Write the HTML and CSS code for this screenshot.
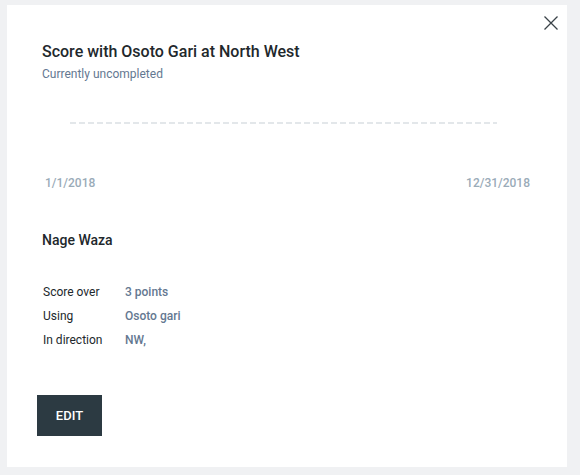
FILE: index.html
```html
<!DOCTYPE html>
<html>
<head>
<meta charset="utf-8">
<link rel="stylesheet" href="styles.css">
</head>
<body>
<div class="card">
  <button class="close" aria-label="Close">
    <svg width="14" height="14" viewBox="0 0 14 14"><path d="M0.5 0.5 L13.5 13.5 M13.5 0.5 L0.5 13.5" stroke="#3a4248" stroke-width="1.3" fill="none"/></svg>
  </button>
  <div class="content">
    <h1 class="title">Score with Osoto Gari at North West</h1>
    <div class="subtitle">Currently uncompleted</div>
    <div class="timeline">
      <div class="track"></div>
      <div class="dates">
        <span class="date">1/1/2018</span>
        <span class="date">12/31/2018</span>
      </div>
    </div>
    <h2 class="section">Nage Waza</h2>
    <div class="details">
      <div class="row"><span class="label">Score over</span><span class="value">3 points</span></div>
      <div class="row"><span class="label">Using</span><span class="value">Osoto gari</span></div>
      <div class="row"><span class="label">In direction</span><span class="value">NW,</span></div>
    </div>
  </div>
  <button class="edit">EDIT</button>
</div>
</body>
</html>
```
FILE: styles.css
```css
html, body {
  margin: 0;
  padding: 0;
  background: #f0f1f3;
  font-family: Roboto, "Liberation Sans", Arial, sans-serif;
}
.card {
  margin: 5px 0 0 7px;
  width: 560px;
  height: 462px;
  background: #ffffff;
  box-sizing: border-box;
  padding: 37px 30px 0 30px;
  position: relative;
}
.close {
  position: absolute;
  top: 11px;
  right: 9px;
  border: 0;
  background: none;
  padding: 0;
  width: 14px;
  height: 14px;
  cursor: pointer;
  line-height: 0;
}
.content {
  padding-left: 5px;
  padding-right: 7px;
}
.title {
  margin: 0;
  font-size: 16px;
  line-height: 20px;
  font-weight: 500;
  color: #22282c;
}
.subtitle {
  margin-top: 4px;
  font-size: 12px;
  line-height: 16px;
  color: #647891;
}
.timeline {
  margin-top: 40px;
}
.track {
  margin: 0 33px 0 28px;
  height: 2px;
  background: repeating-linear-gradient(to right, #e3e7ea 0 6px, transparent 6px 9px);
}
.dates {
  display: flex;
  justify-content: space-between;
  margin-top: 51px;
  padding-left: 3px;
  font-size: 12px;
  line-height: 16px;
  font-weight: 500;
  color: #9aabb8;
}
.section {
  margin: 41px 0 0 0;
  font-size: 14px;
  line-height: 16px;
  font-weight: 500;
  color: #22282c;
}
.details {
  margin-top: 32px;
  padding-left: 1px;
}
.row {
  display: flex;
  font-size: 12px;
  line-height: 24px;
}
.label {
  width: 82px;
  color: #22282c;
}
.value {
  color: #647891;
  font-weight: 500;
}
.edit {
  margin-top: 43px;
  width: 65px;
  height: 41px;
  border: 0;
  background: #2c3a42;
  color: #ffffff;
  font-family: Roboto, "Liberation Sans", Arial, sans-serif;
  font-size: 13px;
  font-weight: 500;
  padding: 0;
  cursor: pointer;
}
```
